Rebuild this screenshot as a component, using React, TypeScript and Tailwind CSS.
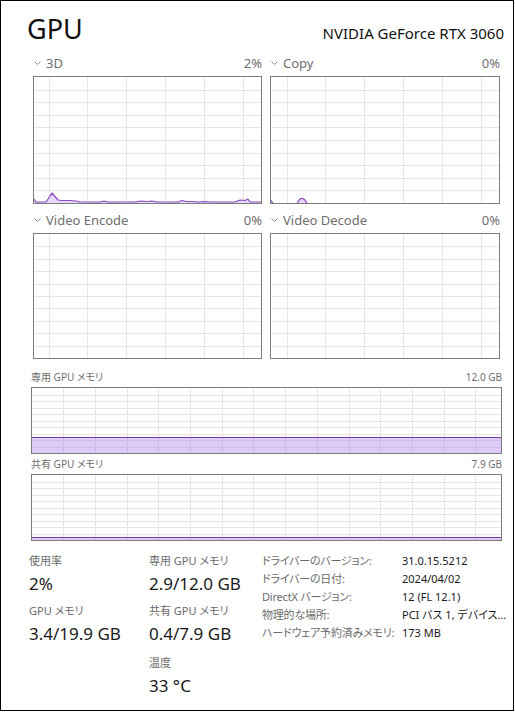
import React from "react";

const GRID = "#e6e6e6";
const LINE = "#8b4ac2";
const FILL = "#e6d8f8";

function GridLines({ w, h, vOffset, vStep, rows }: { w: number; h: number; vOffset: number; vStep: number; rows: number }) {
  const lines: React.ReactElement[] = [];
  for (let i = 1; i < rows; i++) {
    const y = Math.round((i * h) / rows) + 0.5;
    lines.push(<line key={"h" + i} x1={0} x2={w} y1={y} y2={y} stroke={GRID} strokeWidth={1} />);
  }
  let k = 0;
  for (let x = vOffset; x < w; x += vStep) {
    const xx = Math.round(x) + 0.5;
    lines.push(<line key={"v" + k++} x1={xx} x2={xx} y1={0} y2={h} stroke={GRID} strokeWidth={1} />);
  }
  return <g shapeRendering="crispEdges">{lines}</g>;
}

function Chart({
  className,
  iw,
  ih,
  vOffset,
  vStep,
  children,
}: {
  className: string;
  iw: number;
  ih: number;
  vOffset: number;
  vStep: number;
  children?: React.ReactNode;
}) {
  return (
    <div className={"border border-[#7d7d7d] bg-white overflow-hidden " + className}>
      <svg width={iw} height={ih} viewBox={`0 0 ${iw} ${ih}`} className="block">
        <GridLines w={iw} h={ih} vOffset={vOffset} vStep={vStep} rows={10} />
        {children}
      </svg>
    </div>
  );
}

function Chevron() {
  return (
    <svg width="7" height="4" viewBox="0 0 7 4" className="ml-[1px] mr-[5px] shrink-0">
      <polyline points="0.5,0.5 3.5,3.5 6.5,0.5" fill="none" stroke="#8a8a8a" strokeWidth={1} />
    </svg>
  );
}

function CellLabel({ label, value }: { label: string; value: string }) {
  return (
    <div className="flex items-center h-[16px] text-[13px] leading-[16px] text-[#6e6e6e] mb-[5px]">
      <Chevron />
      <span>{label}</span>
      <span className="ml-auto">{value}</span>
    </div>
  );
}

const pts3d: [number, number][] = [
  [0, 122], [2, 125], [12, 125], [18, 116], [24, 123], [28, 123.5], [36, 123.5], [42, 124], [46, 125],
  [66, 125], [70, 124], [74, 125], [101, 125], [107, 124], [113, 124.5], [118, 124], [124, 125],
  [144, 125], [148, 123.5], [152, 124.5], [158, 124.5], [164, 125], [171, 124.5], [176, 125],
  [201, 125], [206, 123], [211, 123.5], [214, 122], [216, 125], [227, 125],
];

const ptsCopy: [number, number][] = [
  [0, 123.5], [2, 126.5], [26, 126.5], [28, 123], [30, 121.5], [32, 121.5], [34, 123], [36, 126.5], [229, 126.5],
];

function Series({ pts, ih, w }: { pts: [number, number][]; ih: number; w: number }) {
  const line = pts.map((p) => p.join(",")).join(" ");
  const poly = line + ` ${w},${ih} 0,${ih}`;
  return (
    <g>
      <polygon points={poly} fill={FILL} />
      <polyline points={line} fill="none" stroke={LINE} strokeWidth={1.2} strokeLinejoin="round" />
    </g>
  );
}

function MemFill({ top, iw, ih }: { top: number; iw: number; ih: number }) {
  return (
    <g>
      <rect x={0} y={top} width={iw} height={ih - top} fill="rgba(150,100,230,0.33)" />
      <line x1={0} x2={iw} y1={top + 0.5} y2={top + 0.5} stroke="#7a3aa8" strokeWidth={1} shapeRendering="crispEdges" />
    </g>
  );
}

function StatLabel({ children, className = "" }: { children: React.ReactNode; className?: string }) {
  return <div className={"h-[16px] text-[11px] leading-[16px] text-[#6b6b6b] whitespace-nowrap " + className}>{children}</div>;
}

function StatValue({ children, className = "" }: { children: React.ReactNode; className?: string }) {
  return <div className={"h-[24px] text-[17px] leading-[24px] text-[#1a1a1a] whitespace-nowrap " + className}>{children}</div>;
}

export default function App() {
  const info: [string, string][] = [
    ["ドライバーのバージョン:", "31.0.15.5212"],
    ["ドライバーの日付:", "2024/04/02"],
    ["DirectX バージョン:", "12 (FL 12.1)"],
    ["物理的な場所:", "PCI バス 1, デバイス..."],
    ["ハードウェア予約済みメモリ:", "173 MB"],
  ];
  return (
    <div className="w-[514px] h-[711px] border border-black bg-white text-[#111] overflow-hidden font-['Noto_Sans','Noto_Sans_CJK_JP',sans-serif] [font-feature-settings:'palt']">
      <div className="flex items-baseline justify-between pt-[12px] pl-[26px] pr-[9px]">
        <span className="text-[27px] leading-[32px]">GPU</span>
        <span className="text-[15px] leading-[20px]">NVIDIA GeForce RTX 3060</span>
      </div>

      <div className="mt-[10px] ml-[32px] grid grid-cols-[229px_230px] gap-x-[8px] gap-y-[8px]">
        <div className="flex flex-col">
          <CellLabel label="3D" value="2%" />
          <Chart className="w-[229px] h-[128px]" iw={227} ih={126} vOffset={14.5} vStep={38.9}>
            <Series pts={pts3d} ih={126} w={227} />
          </Chart>
        </div>
        <div className="flex flex-col">
          <CellLabel label="Copy" value="0%" />
          <Chart className="w-[230px] h-[128px]" iw={228} ih={126} vOffset={15.5} vStep={38.9}>
            <Series pts={ptsCopy} ih={126} w={228} />
          </Chart>
        </div>
        <div className="flex flex-col">
          <CellLabel label="Video Encode" value="0%" />
          <Chart className="w-[229px] h-[126px]" iw={227} ih={124} vOffset={14.5} vStep={38.9} />
        </div>
        <div className="flex flex-col">
          <CellLabel label="Video Decode" value="0%" />
          <Chart className="w-[230px] h-[126px]" iw={228} ih={124} vOffset={15.5} vStep={38.9} />
        </div>
      </div>

      <div className="mt-[11px] ml-[30px] w-[471px]">
        <div className="flex justify-between h-[14px] text-[10px] leading-[14px] text-[#6e6e6e] mb-[3px]">
          <span>専用 GPU メモリ</span>
          <span>12.0 GB</span>
        </div>
        <Chart className="w-[471px] h-[67px]" iw={469} ih={65} vOffset={31.3} vStep={31.7}>
          <MemFill top={49} iw={469} ih={65} />
        </Chart>
        <div className="mt-[3px] flex justify-between h-[14px] text-[10px] leading-[14px] text-[#6e6e6e] mb-[3px]">
          <span>共有 GPU メモリ</span>
          <span>7.9 GB</span>
        </div>
        <Chart className="w-[471px] h-[67px]" iw={469} ih={65} vOffset={31.3} vStep={31.7}>
          <MemFill top={62} iw={469} ih={65} />
        </Chart>
      </div>

      <div className="mt-[11px] flex pl-[28px]">
        <div className="w-[120px] pt-[1px] flex flex-col">
          <StatLabel>使用率</StatLabel>
          <StatValue className="mt-[3px]">2%</StatValue>
          <StatLabel className="mt-[7px]">GPU メモリ</StatLabel>
          <StatValue className="mt-[3px]">3.4/19.9 GB</StatValue>
        </div>
        <div className="w-[113px] pt-[1px] flex flex-col">
          <StatLabel>専用 GPU メモリ</StatLabel>
          <StatValue className="mt-[3px]">2.9/12.0 GB</StatValue>
          <StatLabel className="mt-[7px]">共有 GPU メモリ</StatLabel>
          <StatValue className="mt-[3px]">0.4/7.9 GB</StatValue>
          <StatLabel className="mt-[9px]">温度</StatLabel>
          <StatValue className="mt-[3px]">33 °C</StatValue>
        </div>
        <div className="grid grid-cols-[140px_100px] auto-rows-[18px] text-[11px] leading-[18px]">
          {info.map(([k, v]) => (
            <React.Fragment key={k}>
              <div className="h-[18px] text-[#6b6b6b] whitespace-nowrap tracking-[-0.2px]">{k}</div>
              <div className="h-[18px] text-[#1a1a1a] whitespace-nowrap">{v}</div>
            </React.Fragment>
          ))}
        </div>
      </div>
    </div>
  );
}
